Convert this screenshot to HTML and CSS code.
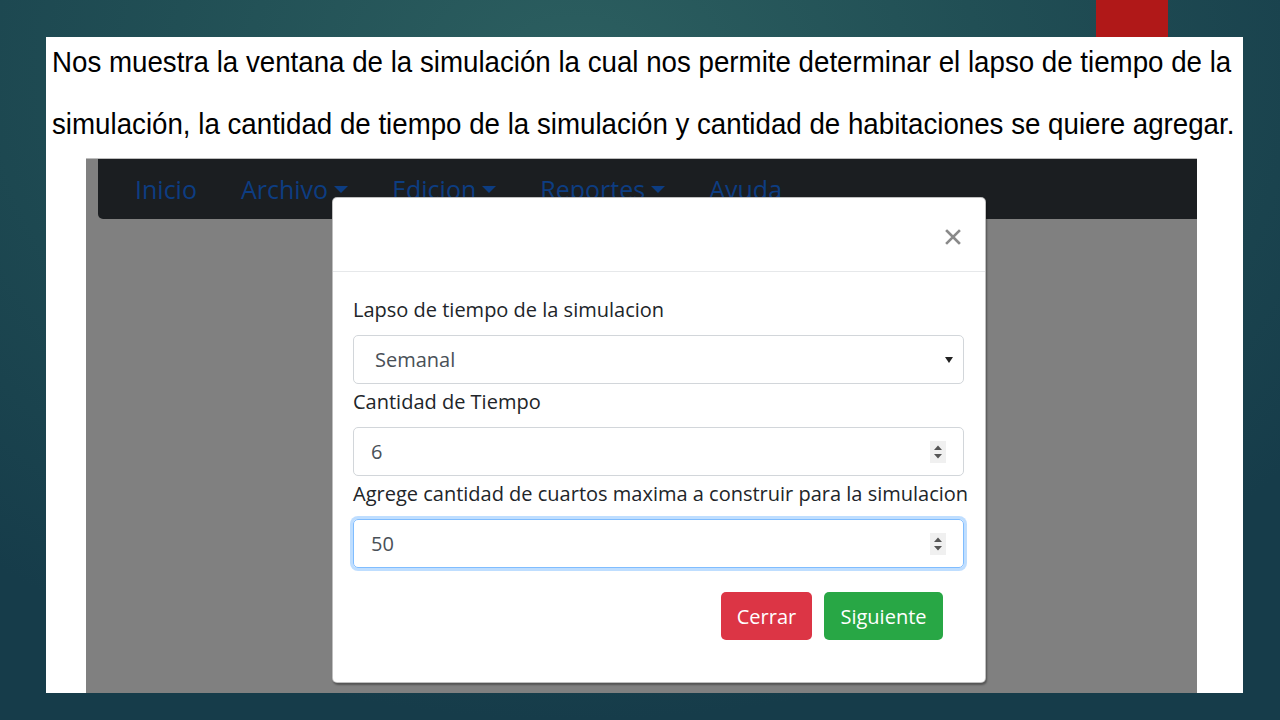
FILE: index.html
```html
<!DOCTYPE html>
<html lang="es">
<head>
<meta charset="utf-8">
<title>Simulación</title>
<link rel="stylesheet" href="styles.css">
</head>
<body>
<div class="slide">
  <div class="topbar"><div class="accent"></div></div>
  <div class="panel">
    <p class="cap"><span class="cap-text">Nos muestra la ventana de la simulación la cual nos permite determinar el lapso de tiempo de la</span></p>
    <p class="cap"><span class="cap-text">simulación, la cantidad de tiempo de la simulación y cantidad de habitaciones se quiere agregar.</span></p>
    <div class="shot">
      <nav class="navbar">
        <span class="nav-link">Inicio</span>
        <span class="nav-link">Archivo<i class="caret"></i></span>
        <span class="nav-link">Edicion<i class="caret"></i></span>
        <span class="nav-link">Reportes<i class="caret"></i></span>
        <span class="nav-link">Ayuda</span>
      </nav>
      <div class="modal">
        <div class="modal-header">
          <svg class="close" width="16" height="16" viewBox="0 0 16 16"><path d="M2 2 L14 14 M14 2 L2 14" stroke="#8a8a8a" stroke-width="2.6" stroke-linecap="square"/></svg>
        </div>
        <div class="modal-body">
          <div class="label">Lapso de tiempo de la simulacion</div>
          <div class="control select"><span class="val">Semanal</span>
            <svg width="8" height="6" viewBox="0 0 8 6"><path d="M0 0 H8 L4 6 Z" fill="#222"/></svg>
          </div>
          <div class="label">Cantidad de Tiempo</div>
          <div class="control number"><span class="val">6</span>
            <span class="spin"><svg width="12" height="18" viewBox="0 0 12 18"><path d="M2 7 L6 2.5 L10 7 Z M2 11 L6 15.5 L10 11 Z" fill="#555"/></svg></span>
          </div>
          <div class="label">Agrege cantidad de cuartos maxima a construir para la simulacion</div>
          <div class="control number focus"><span class="val">50</span>
            <span class="spin"><svg width="12" height="18" viewBox="0 0 12 18"><path d="M2 7 L6 2.5 L10 7 Z M2 11 L6 15.5 L10 11 Z" fill="#555"/></svg></span>
          </div>
          <div class="footer">
            <span class="btn btn-red">Cerrar</span>
            <span class="btn btn-green">Siguiente</span>
          </div>
        </div>
      </div>
    </div>
  </div>
</div>
</body>
</html>
```
FILE: styles.css
```css
* { box-sizing: border-box; }
html, body { margin: 0; padding: 0; }
body {
  width: 1280px;
  height: 720px;
  overflow: hidden;
  background: radial-gradient(ellipse 70% 90% at 45% 10%, #2c5f60 0%, #214f55 45%, #163c4a 100%);
  font-family: "Liberation Sans", Arial, sans-serif;
}
.slide { display: flex; flex-direction: column; height: 720px; }
.topbar { height: 37px; display: flex; justify-content: flex-end; padding-right: 112px; flex: none; }
.accent { width: 72px; height: 37px; background: #b01818; }
.panel {
  margin-left: 46px;
  width: 1197px;
  height: 656px;
  background: #fff;
  display: flex;
  flex-direction: column;
  flex: none;
}
.cap {
  margin: 0 0 12px 0;
  padding-left: 6px;
  height: 50px;
  line-height: 50px;
  white-space: nowrap;
  font-size: 29px;
  color: #000;
}
.cap-text { display: inline-block; transform: scaleX(0.955); transform-origin: left center; }
.cap + .cap { margin-bottom: 9px; }
.shot {
  margin-left: 40px;
  width: 1111px;
  flex: 1;
  background: #808080;
  border-top: 1px solid #bdbdbd;
  position: relative;
  font-family: "Open Sans", "Noto Sans", sans-serif;
}
.navbar {
  margin-left: 12px;
  height: 60px;
  background: #1b1e21;
  border-bottom-left-radius: 5px;
  display: flex;
  align-items: center;
  padding-left: 37px;
  gap: 44px;
}
.nav-link { color: #0d3d82; font-size: 25px; display: flex; align-items: center; }
.caret {
  display: inline-block;
  margin-left: 6px;
  width: 0; height: 0;
  border-left: 7px solid transparent;
  border-right: 7px solid transparent;
  border-top: 7px solid #0d3d82;
}
.modal {
  position: absolute;
  left: 246px;
  top: 38px;
  width: 654px;
  height: 486px;
  background: #fff;
  border: 1px solid rgba(0,0,0,.25);
  border-radius: 5px;
  box-shadow: 1px 2px 2px rgba(0,0,0,.35);
}
.modal-header {
  height: 74px;
  border-bottom: 1px solid #e6e8ea;
  display: flex;
  align-items: center;
  justify-content: flex-end;
  padding-right: 24px;
}
.close { margin-top: 4px; }
.modal-body { padding: 24px 21px 0 20px; }
.label {
  font-size: 20px;
  line-height: 28px;
  color: #212529;
  margin-bottom: 11px;
  white-space: nowrap;
}
.control {
  height: 49px;
  border: 1px solid #d2d6da;
  border-radius: 5px;
  display: flex;
  align-items: center;
  justify-content: space-between;
  padding: 0 18px 0 17px;
  font-size: 20px;
  color: #495057;
  margin-bottom: 4px;
}
.select { padding-left: 21px; padding-right: 10px; }
.number { padding-right: 17px; }
.spin { display: flex; background: #f0f0f0; padding: 2px 2px; }
.focus {
  border-color: #80bdff;
  box-shadow: 0 0 0 3px rgba(0,123,255,.25);
}
.footer {
  display: flex;
  justify-content: flex-end;
  gap: 12px;
  margin-top: 24px;
  padding-right: 21px;
}
.btn {
  height: 48px;
  display: flex;
  align-items: center;
  justify-content: center;
  padding: 0 12px;
  border-radius: 5px;
  color: #fff;
  font-size: 20px;
}
.btn-red { background: #dc3545; width: 91px; }
.btn-green { background: #28a745; width: 119px; }
```
